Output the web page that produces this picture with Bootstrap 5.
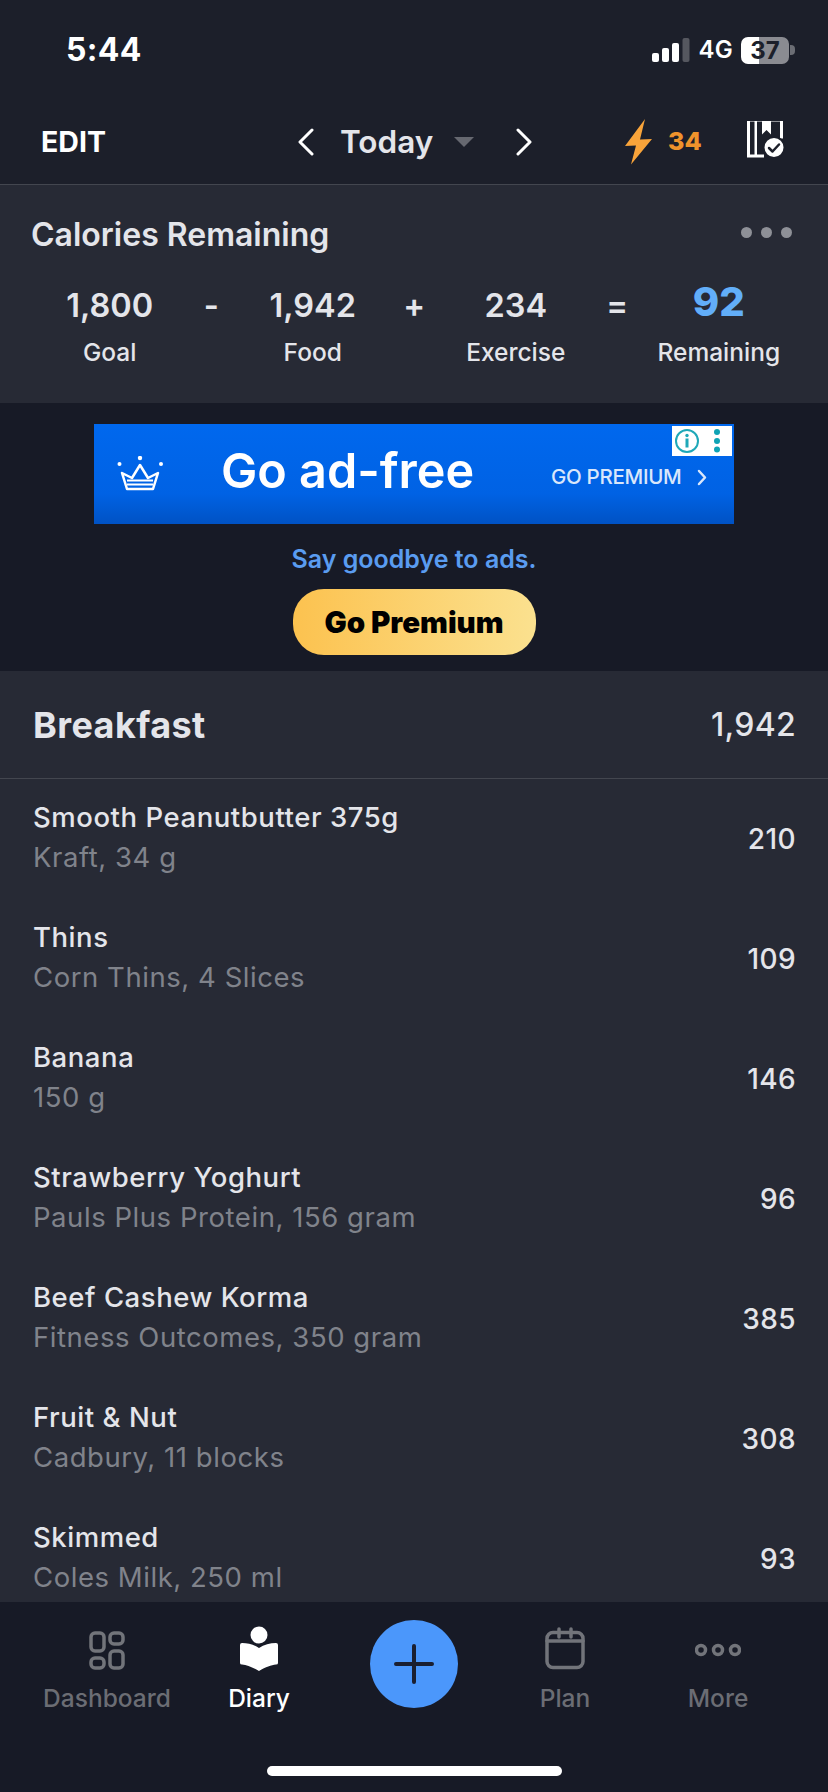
<!DOCTYPE html>
<html lang="en">
<head>
<meta charset="utf-8">
<title>Diary</title>
<link href="https://cdn.jsdelivr.net/npm/bootstrap@5.3.0/dist/css/bootstrap.min.css" rel="stylesheet">
<style>
html,body{height:1792px;overflow:hidden}
body{background:#171a26;font-family:Inter,"Noto Sans",sans-serif;color:#e4e5ea}
.app-shell{width:828px;height:1792px}
.top-head{height:185px;background:#1c1f2a;border-bottom:1px solid #43464f;flex:none}
.status-row{height:100px;padding:0 33px 0 66px}
.clock{font-size:32px;font-weight:700;color:#fff;letter-spacing:.3px}
.net{font-size:24px;font-weight:600;color:#fff;margin:0 8px 0 8px;letter-spacing:.3px}
.batt{width:48px;height:27px;border-radius:7px;background:linear-gradient(90deg,#fff 0 37.5%,#8a8b91 37.5% 100%);color:#1c1f2a;font-size:24px;font-weight:700;line-height:27px;text-align:center}
.batt-tip{width:5px;height:10px;background:#6b6d74;border-radius:0 4px 4px 0;margin-left:1px}
.nav-row{height:84px;padding-left:41px}
.edit-btn{width:256px;font-size:28.500px;font-weight:700;color:#fff}
.day-name{font-size:31.500px;font-weight:600;margin:0 22px 0 26px;width:92px;white-space:nowrap}
.caret-tri{width:20px;height:10px;background:#666870;clip-path:polygon(0 0,100% 0,50% 100%);margin-right:42px}
.bolt-wrap{margin-left:92px;width:43px}
.streak{font-size:25px;font-weight:800;color:#ef932c;width:79px}
.summary{height:218px;background:#272a35;padding:29px 36px 0 31px;flex:none}
.sum-title{font-size:32px;font-weight:600;line-height:42px}
.dot-set{gap:9px;margin-top:-6px}
.dot-set span{width:11px;height:11px;border-radius:50%;background:#8e9097}
.calc-grid{display:grid;grid-template-columns:repeat(7,101.500px);margin:26px 0 0 28px}
.calc-cell{white-space:nowrap}
.calc-num{font-size:32.500px;font-weight:600;line-height:48px;height:48px}
.calc-num.blue{color:#62aef9;font-size:40px;font-weight:800;line-height:40px}
.calc-lab{font-size:24.500px;line-height:34px;margin-top:5px;font-weight:500}
.promo{height:268px;background:#171a26;flex:none;padding-top:21px}
.ad-banner{width:640px;height:100px;background:linear-gradient(180deg,#0068ee,#0062e4 70%,#0052c4);color:#fff;position:relative;padding-left:23px}
.ad-main{font-size:48.500px;font-weight:600;width:330px;margin-left:56px;margin-top:-6px;white-space:nowrap}
.ad-cta{font-size:20.500px;font-weight:500;opacity:.85;margin-top:6px;white-space:nowrap;letter-spacing:-.3px}
.ad-chev{margin:6px 0 0 16px;opacity:.85}
.ad-mark{position:absolute;top:2px;right:2px;width:60px;height:30px;background:#fff}
.say-bye{font-size:25px;font-weight:600;color:#5a9cf0;line-height:30px;margin-top:20px}
.prem-btn{display:block;width:243px;height:66px;margin:15px auto 0;border:0;border-radius:31px;background:linear-gradient(90deg,#fcc24f,#fbe18f);color:#000;font-size:29.500px;font-weight:900;padding:0}
.foods{background:#272a35;flex:1 1 0;min-height:0;overflow:hidden}
.meal-head{height:108px;padding:0 32px 0 33px;border-bottom:1px solid #43464f}
.meal-name{font-size:36px;font-weight:700;letter-spacing:.4px}
.meal-total{font-size:32px;font-weight:500;letter-spacing:.3px}
.foods .list-group-item{height:120px;background:transparent;border:0;color:#e4e5ea;padding:0 32px 0 33px;border-radius:0}
.food-text{margin-top:-5px}
.food-name{font-size:27.500px;font-weight:500;line-height:36px;letter-spacing:.55px}
.food-sub{font-size:27.500px;color:#80838b;line-height:36px;margin-top:4px;letter-spacing:.55px}
.food-cal{font-size:28px;font-weight:500;letter-spacing:.4px}
.tabbar{height:190px;background:#171a26;flex:none;position:relative}
.tab-item{position:absolute;top:24px;display:flex;flex-direction:column;align-items:center;width:140px;height:90px;color:#6b6d74;font-size:24.500px;font-weight:500}
.tab-item svg{height:46px;flex:none}
.tab-item span{position:absolute;top:55px;line-height:34px}
.tab-item.active{color:#fff}
.fab-add{position:absolute;left:370px;top:18px;width:88px;height:88px;border-radius:50%;background:#4b97fb;border:0;padding:0}
.home-bar{position:absolute;left:267px;top:164px;width:295px;height:10px;border-radius:5px;background:#fff}
</style>
</head>
<body>
<div class="app-shell d-flex flex-column">
  <header class="top-head">
    <div class="status-row d-flex align-items-center justify-content-between">
      <div class="clock">5:44</div>
      <div class="d-flex align-items-center">
        <svg width="38" height="24" viewBox="0 0 38 24" fill="#fff"><rect x="0" y="15" width="7" height="9" rx="2"/><rect x="10" y="10" width="7" height="14" rx="2"/><rect x="20" y="5" width="7" height="19" rx="2"/><rect x="30.500" y="0" width="7" height="24" rx="2" fill="#55575f"/></svg>
        <div class="net">4G</div>
        <div class="batt">37</div>
        <div class="batt-tip"></div>
      </div>
    </div>
    <div class="nav-row d-flex align-items-center">
      <div class="edit-btn">EDIT</div>
      <svg width="17" height="28" viewBox="0 0 17 28" fill="none" stroke="#fff" stroke-width="3" stroke-linecap="round" stroke-linejoin="round"><path d="M15 2 3 14l12 12"/></svg>
      <div class="day-name">Today</div>
      <div class="caret-tri"></div>
      <svg width="17" height="28" viewBox="0 0 17 28" fill="none" stroke="#fff" stroke-width="3" stroke-linecap="round" stroke-linejoin="round"><path d="M2 2l12 12L2 26"/></svg>
      <div class="bolt-wrap"><svg width="28" height="46" viewBox="0 0 28 46" fill="#f9a43a" class="d-block"><path d="M20 0 0 27l11-.5L6 45.500 27 20l-12 .5z"/></svg></div>
      <div class="streak">34</div>
      <svg width="40" height="42" viewBox="0 2.500 40 42" class="d-block"><path d="M1.500 1.500H34.500V20M17 37.500H1.500V1.500" fill="none" stroke="#fff" stroke-width="3"/><rect x="7.500" y="1" width="2.500" height="37" fill="#fff"/><path d="M15 0H24V16L19.500 11.500 15 16z" fill="#fff"/><circle cx="27" cy="29" r="10.500" fill="#fff" stroke="#1c1f2a" stroke-width="2"/><path d="M22 29.500l3.500 3.500 6.500-7" fill="none" stroke="#1c1f2a" stroke-width="2.500" stroke-linecap="round" stroke-linejoin="round"/></svg>
    </div>
  </header>

  <section class="summary">
    <div class="d-flex align-items-center justify-content-between">
      <div class="sum-title">Calories Remaining</div>
      <div class="dot-set d-flex"><span></span><span></span><span></span></div>
    </div>
    <div class="calc-grid">
      <div class="calc-cell d-flex flex-column align-items-center"><div class="calc-num">1,800</div><div class="calc-lab">Goal</div></div>
      <div class="calc-cell d-flex flex-column align-items-center"><div class="calc-num">-</div></div>
      <div class="calc-cell d-flex flex-column align-items-center"><div class="calc-num">1,942</div><div class="calc-lab">Food</div></div>
      <div class="calc-cell d-flex flex-column align-items-center"><div class="calc-num">+</div></div>
      <div class="calc-cell d-flex flex-column align-items-center"><div class="calc-num">234</div><div class="calc-lab">Exercise</div></div>
      <div class="calc-cell d-flex flex-column align-items-center"><div class="calc-num">=</div></div>
      <div class="calc-cell d-flex flex-column align-items-center"><div class="calc-num blue">92</div><div class="calc-lab">Remaining</div></div>
    </div>
  </section>

  <section class="promo text-center">
    <div class="ad-banner mx-auto d-flex align-items-center text-start">
      <svg width="48" height="36" viewBox="117 454 48 36" fill="none" stroke="#fff" stroke-width="2.500" stroke-linejoin="round" class="flex-none"><path d="M122 471l10 5 8-13 8 13 10-5-5 16h-26z"/><path d="M127 478.500h26M127 482.500h26" stroke-width="2"/><circle cx="119.500" cy="462" r="2" fill="#fff" stroke="none"/><circle cx="140" cy="456" r="2.200" fill="#fff" stroke="none"/><circle cx="161" cy="462" r="2" fill="#fff" stroke="none"/></svg>
      <div class="ad-main">Go ad-free</div>
      <div class="ad-cta">GO PREMIUM</div>
      <svg width="10" height="17" viewBox="0 0 10 17" fill="none" stroke="#fff" stroke-width="2.500" stroke-linecap="round" stroke-linejoin="round" class="ad-chev"><path d="M2 2l6 6.500L2 15"/></svg>
      <div class="ad-mark">
        <svg width="60" height="30" viewBox="0 0 60 30" class="d-block"><circle cx="15" cy="15" r="11" fill="none" stroke="#1fa8b8" stroke-width="2"/><circle cx="15" cy="9.500" r="1.700" fill="#1fa8b8"/><rect x="13.500" y="12.500" width="3" height="9" fill="#1fa8b8"/><circle cx="45" cy="6" r="3" fill="#0fa3b5"/><circle cx="45" cy="15" r="3" fill="#0fa3b5"/><circle cx="45" cy="23.500" r="3" fill="#0fa3b5"/></svg>
      </div>
    </div>
    <div class="say-bye">Say goodbye to ads.</div>
    <button type="button" class="btn prem-btn">Go Premium</button>
  </section>

  <section class="foods">
    <div class="meal-head d-flex align-items-center justify-content-between">
      <div class="meal-name">Breakfast</div>
      <div class="meal-total">1,942</div>
    </div>
    <div class="list-group list-group-flush">
      <div class="list-group-item d-flex align-items-center justify-content-between"><div class="food-text"><div class="food-name">Smooth Peanutbutter 375g</div><div class="food-sub">Kraft, 34 g</div></div><div class="food-cal">210</div></div>
      <div class="list-group-item d-flex align-items-center justify-content-between"><div class="food-text"><div class="food-name">Thins</div><div class="food-sub">Corn Thins, 4 Slices</div></div><div class="food-cal">109</div></div>
      <div class="list-group-item d-flex align-items-center justify-content-between"><div class="food-text"><div class="food-name">Banana</div><div class="food-sub">150 g</div></div><div class="food-cal">146</div></div>
      <div class="list-group-item d-flex align-items-center justify-content-between"><div class="food-text"><div class="food-name">Strawberry Yoghurt</div><div class="food-sub">Pauls Plus Protein, 156 gram</div></div><div class="food-cal">96</div></div>
      <div class="list-group-item d-flex align-items-center justify-content-between"><div class="food-text"><div class="food-name">Beef Cashew Korma</div><div class="food-sub">Fitness Outcomes, 350 gram</div></div><div class="food-cal">385</div></div>
      <div class="list-group-item d-flex align-items-center justify-content-between"><div class="food-text"><div class="food-name">Fruit &amp; Nut</div><div class="food-sub">Cadbury, 11 blocks</div></div><div class="food-cal">308</div></div>
      <div class="list-group-item d-flex align-items-center justify-content-between"><div class="food-text"><div class="food-name">Skimmed</div><div class="food-sub">Coles Milk, 250 ml</div></div><div class="food-cal">93</div></div>
    </div>
  </section>

  <nav class="tabbar">
    <div class="tab-item" style="left:37px">
      <svg width="38" height="46" viewBox="0 0 38 46" fill="none" stroke="#72747a" stroke-width="3.500"><rect x="3" y="7" width="13" height="18" rx="4"/><rect x="22" y="7" width="13" height="11" rx="4"/><rect x="3" y="32" width="13" height="10" rx="4"/><rect x="22" y="25" width="13" height="17" rx="4"/></svg>
      <span>Dashboard</span>
    </div>
    <div class="tab-item active" style="left:189px">
      <svg width="38" height="46" viewBox="0 0 38 46" fill="#fff"><circle cx="19" cy="9" r="8.500"/><path d="M0 19q0-2 2-2c6 0 12 1.500 17 5 5-3.500 11-5 17-5q2 0 2 2v18q0 1.500-2 1.500c-5 .5-10 2.500-17 6.500-7-4-12-6-17-6.500q-2 0-2-1.500z"/></svg>
      <span>Diary</span>
    </div>
    <button type="button" class="btn fab-add" aria-label="Add">
      <svg width="88" height="88" viewBox="0 0 88 88" fill="none" stroke="#1a1f30" stroke-width="4" stroke-linecap="round" class="d-block"><path d="M44 26v36M26 44h36"/></svg>
    </button>
    <div class="tab-item" style="left:495px">
      <svg width="42" height="46" viewBox="0 0 42 46" fill="none" stroke="#72747a" stroke-width="3.500" stroke-linecap="round"><rect x="3" y="6.500" width="36" height="35" rx="6"/><path d="M3 15h36M15 3v8M27 3v8"/></svg>
      <span>Plan</span>
    </div>
    <div class="tab-item" style="left:648px">
      <svg width="46" height="46" viewBox="0 0 46 46" fill="none" stroke="#72747a" stroke-width="3.500"><circle cx="6" cy="24" r="4.500"/><circle cx="23" cy="24" r="4.500"/><circle cx="40" cy="24" r="4.500"/></svg>
      <span>More</span>
    </div>
    <div class="home-bar"></div>
  </nav>
</div>
<script src="https://cdn.jsdelivr.net/npm/bootstrap@5.3.0/dist/js/bootstrap.bundle.min.js"></script>
</body>
</html>
